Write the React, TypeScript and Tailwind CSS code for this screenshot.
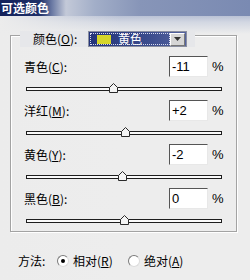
const rows = [
  { label: "青色", key: "C", value: -11, text: "-11" },
  { label: "洋红", key: "M", value: 2, text: "+2" },
  { label: "黄色", key: "Y", value: -2, text: "-2" },
  { label: "黑色", key: "B", value: 0, text: "0" },
];

function Thumb({ value }: { value: number }) {
  const left = ((value + 100) / 200) * 196 - 4.5;
  return (
    <svg
      className="absolute top-0"
      style={{ left }}
      width="9"
      height="10"
      viewBox="0 0 9 10"
    >
      <polygon points="0.5,4.5 4.5,0.5 8.5,4.5 8.5,9.5 0.5,9.5" fill="#f4f4f4" stroke="#2a2a2a" />
    </svg>
  );
}

function Radio({ checked }: { checked?: boolean }) {
  return (
    <span className="flex h-[12px] w-[12px] items-center justify-center rounded-full border border-t-[#7a7a7a] border-l-[#7a7a7a] border-b-[#dcdcdc] border-r-[#dcdcdc] bg-white">
      {checked && <span className="h-[4px] w-[4px] rounded-full bg-black" />}
    </span>
  );
}

export default function App() {
  return (
    <div className="h-[280px] w-[250px] overflow-hidden bg-[linear-gradient(to_right,#ececec_0px,rgba(237,237,237,0)_120px),linear-gradient(to_bottom,#a9b4cd_12px,#d2d7e2_22px,#ededed_34px)] font-['Noto_Sans_CJK_SC',sans-serif] text-[12px] text-black">
      <div className="flex h-[16px] items-center bg-[linear-gradient(to_right,#13215a_0px,#1f3068_40px,#6b7aa4_52px,#c3c9d8_66px,#a2aec8_95px,#8795b8_140px,#7a8ab2_250px)] pl-[1px] text-[12px] font-bold leading-[16px] text-white">
        可选颜色
      </div>

      <div className="ml-[10px] mt-[19px] h-[197px] w-[227px] border border-[#a3a3a3] shadow-[1px_1px_0_#ffffff,inset_1px_1px_0_#ffffff]">
        <div className="-mt-[5px] ml-[9px] flex h-[16px] w-[175px] items-center bg-[#e6e7ea] pl-[13px]">
          <span className="w-[55px] leading-[16px]">
            颜色(<span className="underline">O</span>):
          </span>
          <div className="flex h-[16px] w-[99px] items-center border border-[#8a8fa0] bg-[linear-gradient(to_right,#24347a,#3a4b8c_60%,#5564a0)]">
            <div className="ml-[1px] flex h-[12px] w-[80px] items-center border border-dotted border-[#d8dcef]">
              <span className="ml-[6px] h-[9px] w-[14px] bg-[#d6d62a]" />
              <span className="ml-[7px] leading-[12px] text-white">黄色</span>
            </div>
            <div className="ml-auto mr-[1px] flex h-[13px] w-[15px] items-center justify-center border border-t-white border-l-white border-b-[#777] border-r-[#777] bg-[#d6d6d6]">
              <svg width="7" height="4" viewBox="0 0 7 4">
                <polygon points="0,0 7,0 3.5,4" fill="#333" />
              </svg>
            </div>
          </div>
        </div>

        <div className="mt-[9px] flex flex-col pl-[13px]">
          {rows.map((r) => (
            <div key={r.key} className="flex h-[44px] flex-col">
              <div className="flex h-[21px] items-center">
                <span className="flex-1 leading-[14px]">
                  {r.label}(<span className="underline">{r.key}</span>):
                </span>
                <div className="flex h-[21px] w-[39px] items-center border border-t-[#555] border-l-[#555] border-b-[#e8e8e8] border-r-[#e8e8e8] bg-white pl-[2px] font-['Liberation_Sans',sans-serif] text-[13px]">
                  {r.text}
                </div>
                <span className="ml-[4px] mr-[13px] w-[11px] font-['Liberation_Sans',sans-serif] text-[13px]">%</span>
              </div>
              <div className="relative ml-[2px] mt-[6px] h-[10px] w-[196px]">
                <div className="mt-[4px] h-[4px] w-[196px] border border-[#1e1e1e] bg-[#fafafa]" />
                <Thumb value={r.value} />
              </div>
            </div>
          ))}
        </div>
      </div>

      <div className="ml-[18px] mt-[22px] flex h-[14px] items-center">
        <span className="w-[39px]">方法:</span>
        <Radio checked />
        <span className="ml-[4px] w-[55px]">
          相对(<span className="underline">R</span>)
        </span>
        <Radio />
        <span className="ml-[4px]">
          绝对(<span className="underline">A</span>)
        </span>
      </div>
    </div>
  );
}
